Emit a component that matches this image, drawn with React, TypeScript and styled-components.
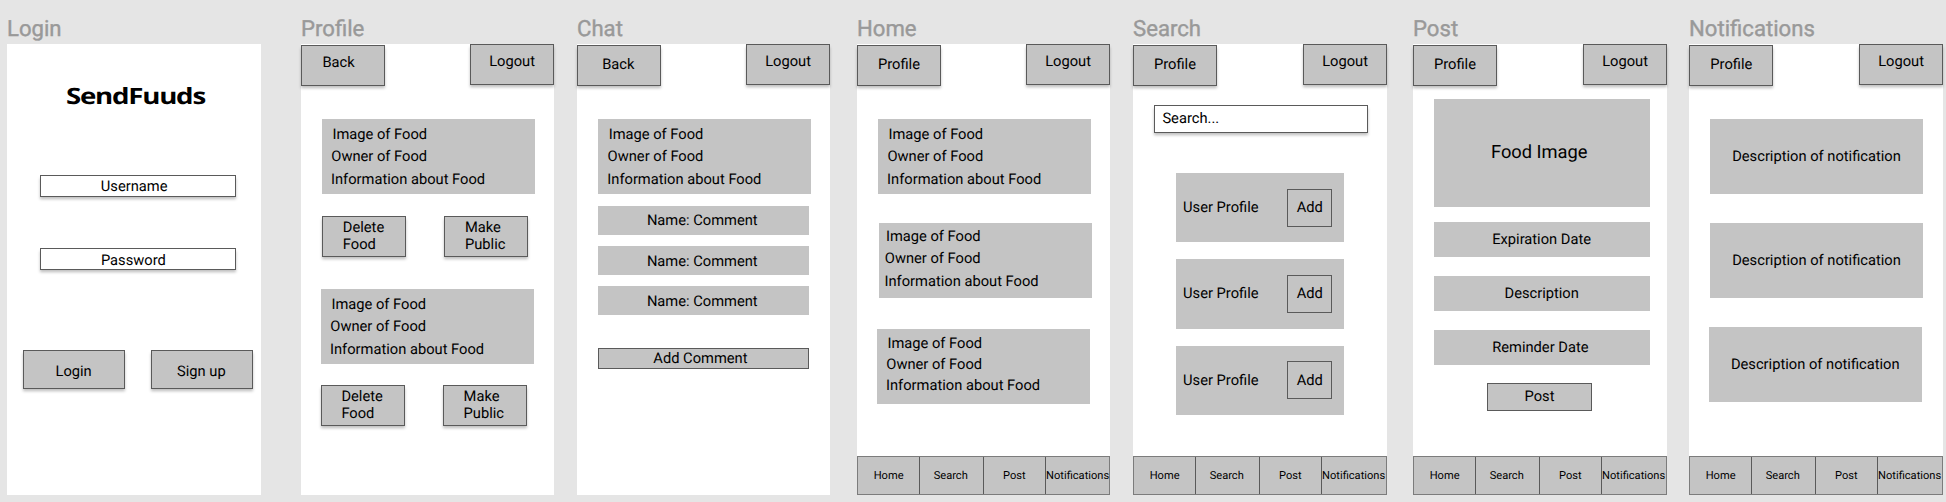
import React from "react";
import styled, { createGlobalStyle, css } from "styled-components";

const GlobalStyle = createGlobalStyle`
  body {
    margin: 0;
    background: #e5e5e5;
    font-family: Roboto, "Liberation Sans", sans-serif;
    font-size: 14.7px;
    line-height: 18px;
    color: #000;
    text-rendering: geometricPrecision;
  }
`;

type Placement = {
  $w?: number;
  $h?: number;
  $mt?: number;
  $ml?: number;
  $pt?: number;
  $pl?: number;
};

const placement = css<Placement>`
  box-sizing: border-box;
  flex: none;
  width: ${(p) => (p.$w === undefined ? "auto" : `${p.$w}px`)};
  height: ${(p) => (p.$h === undefined ? "auto" : `${p.$h}px`)};
  margin-top: ${(p) => p.$mt ?? 0}px;
  margin-left: ${(p) => p.$ml ?? 0}px;
  padding-top: ${(p) => p.$pt ?? 0}px;
  padding-left: ${(p) => p.$pl ?? 0}px;
  white-space: nowrap;
`;

const Board = styled.main`
  display: flex;
  align-items: flex-start;
  box-sizing: border-box;
  width: 1946px;
  height: 502px;
  padding: 15px 0 0 7px;
  overflow: hidden;
`;

const Artboard = styled.section<{ $w: number; $gap: number }>`
  flex: none;
  width: ${(p) => p.$w}px;
  margin-left: ${(p) => p.$gap}px;
`;

const ArtboardTitle = styled.h2`
  height: 29px;
  margin: 0;
  font-size: 22.15px;
  font-weight: 400;
  line-height: 28px;
  color: #999;
  -webkit-text-stroke: 0.4px #999;
`;

const Screen = styled.div`
  display: flex;
  flex-direction: column;
  align-items: flex-start;
  height: 451px;
  background: #fff;
`;

const Row = styled.div<Placement>`
  ${placement}
  display: flex;
  align-items: flex-start;
`;

const Logo = styled.h1<Placement>`
  ${placement}
  margin-bottom: 0;
  font-family: "Open Sans", sans-serif;
  font-size: 22.4px;
  font-weight: 700;
  line-height: 30px;
  letter-spacing: -1px;
  transform: scaleX(1.235);
  transform-origin: left;
`;

const Button = styled.button<Placement & { $flat?: boolean; $leading?: number }>`
  ${placement}
  display: flex;
  align-items: flex-start;
  padding-right: 0;
  padding-bottom: 0;
  border: 1px solid #5a5a5a;
  border-radius: 0;
  background: #c4c4c4;
  box-shadow: ${(p) => (p.$flat ? "none" : "0 2.8px 2.8px rgba(0, 0, 0, 0.25)")};
  color: inherit;
  font: inherit;
  line-height: ${(p) => p.$leading ?? 18}px;
  text-align: left;
  text-rendering: inherit;
  white-space: pre-line;
`;

const Field = styled.div<Placement>`
  ${placement}
  border: 1px solid #5a5a5a;
  background: #fff;
  box-shadow: 0 2.8px 2.8px rgba(0, 0, 0, 0.25);
`;

const Card = styled.div<Placement>`
  ${placement}
  background: #c4c4c4;
`;

const ImageCard = styled(Card)`
  font-size: 18.3px;
  line-height: 22px;
`;

const CardLine = styled.div<{ $indent: number; $leading: number }>`
  margin-left: ${(p) => p.$indent}px;
  line-height: ${(p) => p.$leading}px;
`;

const UserCard = styled(Card)`
  display: flex;
  align-items: flex-start;
`;

const UserName = styled.span<Placement>`
  ${placement}
`;

const TopBar = styled.header`
  display: flex;
  justify-content: space-between;
  align-items: flex-start;
  width: 100%;
  height: 42px;
`;

const NavBar = styled.nav`
  display: flex;
  box-sizing: border-box;
  width: 100%;
  height: 39px;
  margin-top: auto;
  border: 1px solid #7c7c7c;
  background: #c4c4c4;
`;

const NavItem = styled.a<{ $w: number; $pl: number }>`
  box-sizing: border-box;
  flex: none;
  width: ${(p) => p.$w}px;
  padding: 12px 0 0 ${(p) => p.$pl}px;
  border-right: 1px solid #5a5a5a;
  font-size: 11.1px;
  line-height: 14px;
  white-space: nowrap;

  &:last-child {
    flex: 1;
    border-right: 0;
  }
`;

function Header({ label, pt = 9, pl }: { label: string; pt?: number; pl: number }) {
  return (
    <TopBar>
      <Button $w={84} $h={41} $mt={1} $pt={pt} $pl={pl}>{label}</Button>
      <Button $w={84} $h={41} $pt={7} $pl={18.2}>Logout</Button>
    </TopBar>
  );
}

function Navigation() {
  return (
    <NavBar>
      <NavItem $w={62} $pl={15.7}>Home</NavItem>
      <NavItem $w={64} $pl={13.7}>Search</NavItem>
      <NavItem $w={62} $pl={19}>Post</NavItem>
      <NavItem $w={64} $pl={0.1}>Notifications</NavItem>
    </NavBar>
  );
}

type FoodCardProps = { mt: number; ml: number; pt?: number; pl?: number; leading?: number };

function FoodCard({ mt, ml, pt = 3.7, pl = 9, leading = 22.7 }: FoodCardProps) {
  return (
    <Card $w={213} $h={75} $mt={mt} $ml={ml} $pt={pt} $pl={pl}>
      <CardLine $indent={1.4} $leading={leading}>Image of Food</CardLine>
      <CardLine $indent={0.3} $leading={leading}>Owner of Food</CardLine>
      <CardLine $indent={0} $leading={leading}>Information about Food</CardLine>
    </Card>
  );
}

type UserRowProps = { mt: number; h: number; addTop: number };

function UserRow({ mt, h, addTop }: UserRowProps) {
  return (
    <UserCard $w={168} $h={h} $mt={mt} $ml={43}>
      <UserName $w={111} $mt={25} $pl={7.1}>User Profile</UserName>
      <Button $flat $w={45} $h={38} $mt={addTop} $pt={24 - addTop} $pl={8.7}>Add</Button>
    </UserCard>
  );
}

function FoodActions({ mt, ml }: { mt: number; ml: number }) {
  return (
    <Row $mt={mt} $ml={ml}>
      <Button $w={84} $h={41} $pt={2.4} $pl={19.8} $leading={17}>{"Delete\nFood"}</Button>
      <Button $w={84} $h={41} $ml={38} $pt={2.4} $pl={20} $leading={17}>{"Make\nPublic"}</Button>
    </Row>
  );
}

export default function App() {
  return (
    <>
      <GlobalStyle />
      <Board>
        <Artboard $w={254} $gap={0}>
          <ArtboardTitle>Login</ArtboardTitle>
          <Screen>
            <Logo $h={30} $mt={37} $ml={59.4}>SendFuuds</Logo>
            <Field $w={196} $h={22} $mt={64} $ml={33} $pt={1} $pl={59.8}>Username</Field>
            <Field $w={196} $h={22} $mt={51} $ml={33} $pt={2} $pl={59.9}>Password</Field>
            <Row $mt={80} $ml={16}>
              <Button $w={102} $h={39} $pt={11.4} $pl={31.5}>Login</Button>
              <Button $w={102} $h={39} $ml={26} $pt={11.4} $pl={25}>Sign up</Button>
            </Row>
          </Screen>
        </Artboard>

        <Artboard $w={253} $gap={40}>
          <ArtboardTitle>Profile</ArtboardTitle>
          <Screen>
            <Header label="Back" pt={7} pl={20.4} />
            <FoodCard mt={33} ml={21} />
            <FoodActions mt={22} ml={21} />
            <FoodCard mt={32} ml={20} />
            <FoodActions mt={21} ml={19.6} />
          </Screen>
        </Artboard>

        <Artboard $w={253} $gap={23}>
          <ArtboardTitle>Chat</ArtboardTitle>
          <Screen>
            <Header label="Back" pl={24.2} />
            <FoodCard mt={33} ml={21} pl={9.3} />
            <Card $w={211} $h={29} $mt={12} $ml={21} $pt={5.4} $pl={48.9}>Name: Comment</Card>
            <Card $w={211} $h={29} $mt={11} $ml={21} $pt={6} $pl={48.9}>Name: Comment</Card>
            <Card $w={211} $h={29} $mt={11} $ml={21} $pt={6} $pl={48.9}>Name: Comment</Card>
            <Button $flat $w={211} $h={21} $mt={33} $ml={21} $pt={0} $pl={54.3}>Add Comment</Button>
          </Screen>
        </Artboard>

        <Artboard $w={253} $gap={27}>
          <ArtboardTitle>Home</ArtboardTitle>
          <Screen>
            <Header label="Profile" pl={20} />
            <FoodCard mt={33} ml={21} pl={9.1} />
            <FoodCard mt={29} ml={22} pt={1.7} pl={5.5} />
            <FoodCard mt={31} ml={20} pt={4.4} leading={20.8} />
            <Navigation />
          </Screen>
        </Artboard>

        <Artboard $w={254} $gap={23}>
          <ArtboardTitle>Search</ArtboardTitle>
          <Screen>
            <Header label="Profile" pl={20} />
            <Field $w={214} $h={28} $mt={19} $ml={21} $pt={3} $pl={7.4}>Search...</Field>
            <UserRow mt={40} h={69} addTop={16} />
            <UserRow mt={17} h={70} addTop={16} />
            <UserRow mt={17} h={69} addTop={15} />
            <Navigation />
          </Screen>
        </Artboard>

        <Artboard $w={254} $gap={26}>
          <ArtboardTitle>Post</ArtboardTitle>
          <Screen>
            <Header label="Profile" pl={20} />
            <ImageCard $w={216} $h={108} $mt={13} $ml={21} $pt={43} $pl={57}>Food Image</ImageCard>
            <Card $w={216} $h={35} $mt={15} $ml={21} $pt={8} $pl={58.2}>Expiration Date</Card>
            <Card $w={216} $h={35} $mt={19} $ml={21} $pt={8} $pl={70.5}>Description</Card>
            <Card $w={216} $h={35} $mt={19} $ml={21} $pt={8} $pl={58.2}>Reminder Date</Card>
            <Button $flat $w={105} $h={28} $mt={18} $ml={74} $pt={3} $pl={36.5}>Post</Button>
            <Navigation />
          </Screen>
        </Artboard>

        <Artboard $w={254} $gap={22}>
          <ArtboardTitle>Notifications</ArtboardTitle>
          <Screen>
            <Header label="Profile" pl={20.3} />
            <Card $w={213} $h={75} $mt={33} $ml={21.4} $pt={28} $pl={21.8}>Description of notification</Card>
            <Card $w={213} $h={75} $mt={29} $ml={21.4} $pt={28} $pl={21.8}>Description of notification</Card>
            <Card $w={213} $h={75} $mt={29} $ml={20} $pt={28} $pl={21.9}>Description of notification</Card>
            <Navigation />
          </Screen>
        </Artboard>
      </Board>
    </>
  );
}
